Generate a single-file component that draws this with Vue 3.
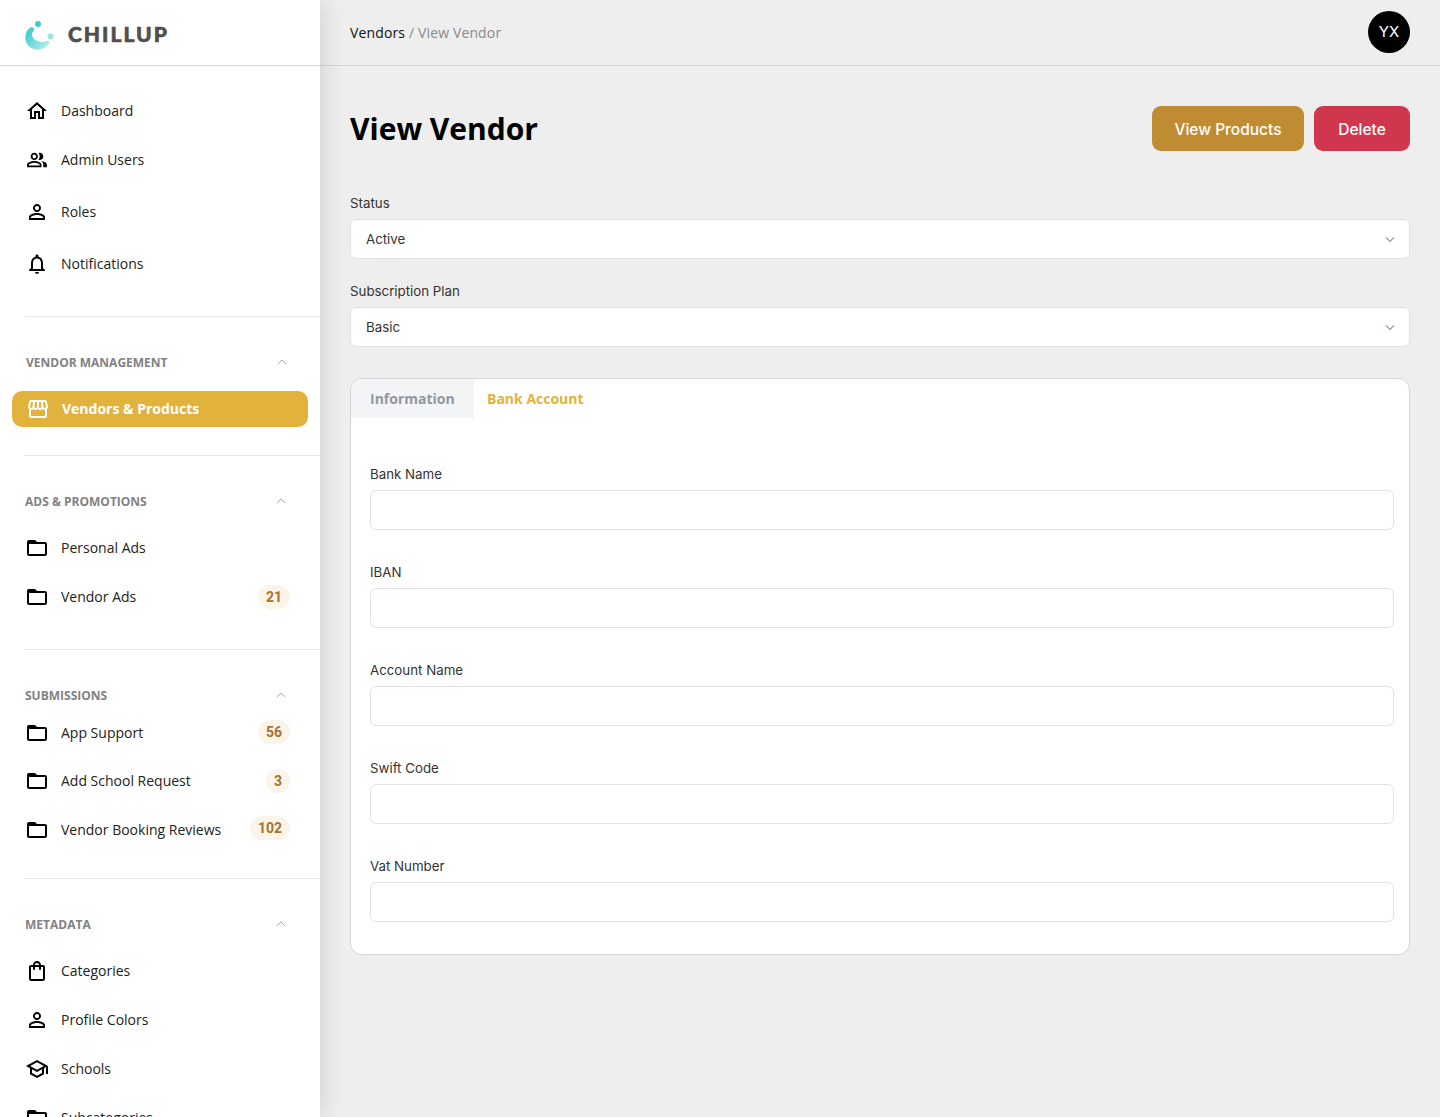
<template>
  <div class="layout">
    <aside class="sidebar">
      <div class="brand">
        <svg class="brand__mark" width="32" height="32" viewBox="0 0 32 32">
          <defs>
            <linearGradient id="arc" x1="0" y1="0" x2="1" y2="1">
              <stop offset="0.25" stop-color="#4ad0d3" />
              <stop offset="1" stop-color="#c4efee" />
            </linearGradient>
          </defs>
          <path d="M6.200 9.600C2.800 12 1.200 16 1.300 20c.2 6.500 5.700 11.700 12.200 11.700 5 0 9.300-2.900 11.500-6.700.8-1.500-.5-2.700-2-2-2.500 1-5 1.200-7.500.8-4-.8-7.200-3.800-7.500-7.300-.1-1.500.5-2.500 1.800-3.700 1.700-1.800-1.300-4.800-3.600-3.200z" fill="url(#arc)" />
          <circle cx="14" cy="6" r="3" fill="#3fcbd0" />
          <circle cx="26.500" cy="18.500" r="3" fill="#9fe3e3" />
        </svg>
        <span class="brand__name">CHILLUP</span>
      </div>

      <ul class="nav-top">
        <li v-for="item in topItems" :key="item.label" class="nav-row" :style="{ height: item.h + 'px' }">
          <svg class="nav-row__icon" :class="{ 'nav-row__icon--small': item.small }" viewBox="0 0 24 24"><path :d="item.icon" /></svg>
          <span class="nav-row__label">{{ item.label }}</span>
        </li>
      </ul>
      <div class="divider" style="margin-top: 27px"></div>

      <section v-for="group in groups" :key="group.title" class="group">
        <div class="group__head" :class="{ 'group__head--shift': group.shift }">
          <span>{{ group.title }}</span>
          <svg width="12" height="12" viewBox="0 0 12 12" fill="none"><path d="M1.800 8 6 4l4.200 4" stroke="#a9a9a9" stroke-width="1" /></svg>
        </div>
        <ul :style="{ marginTop: group.top + 'px' }">
          <li
            v-for="item in group.items"
            :key="item.label"
            class="nav-row"
            :class="{ 'nav-row--active': item.active }"
            :style="{ height: item.h + 'px' }"
          >
            <svg class="nav-row__icon" viewBox="0 0 24 24"><path :d="item.icon" /></svg>
            <span class="nav-row__label">{{ item.label }}</span>
            <span v-if="item.badge" class="badge" :style="{ marginBottom: (item.lift || 0) + 'px' }">{{ item.badge }}</span>
          </li>
        </ul>
        <div v-if="group.after" class="divider" :style="{ marginTop: group.after + 'px' }"></div>
      </section>
    </aside>

    <main class="main">
      <header class="topbar">
        <div class="crumbs"><a>Vendors</a> / View Vendor</div>
        <div class="avatar">YX</div>
      </header>

      <div class="content">
        <div class="title-row">
          <h1>View Vendor</h1>
          <div class="actions">
            <button class="btn btn--gold">View Products</button>
            <button class="btn btn--red">Delete</button>
          </div>
        </div>

        <div v-for="sel in selects" :key="sel.label" class="select-field">
          <label>{{ sel.label }}</label>
          <div class="select">
            <span>{{ sel.value }}</span>
            <svg width="12" height="12" viewBox="0 0 12 12" fill="none"><path d="M2 4.300 6 8.300l4-4" stroke="#8b95a3" stroke-width="1.200" /></svg>
          </div>
        </div>

        <div class="card">
          <div class="tabs">
            <div class="tab">Information</div>
            <div class="tab tab--active">Bank Account</div>
          </div>
          <div class="form">
            <div v-for="name in bankFields" :key="name" class="field">
              <label>{{ name }}</label>
              <input type="text" />
            </div>
          </div>
        </div>
      </div>
    </main>
  </div>
</template>

<script setup>
const home = 'M12 5.690l5 4.500V18h-2v-6H9v6H7v-7.810l5-4.500M12 3L2 12h3v8h6v-6h2v6h6v-8h3L12 3z'
const people = 'M16.670 13.130C18.040 14.060 19 15.320 19 17v3h4v-3c0-2.180-3.570-3.470-6.330-3.870zM15 12c2.210 0 4-1.790 4-4s-1.790-4-4-4c-.47 0-.91.1-1.330.24C14.500 5.270 15 6.580 15 8s-.5 2.730-1.330 3.760c.42.14.86.24 1.330.24zM9 12c2.210 0 4-1.790 4-4s-1.790-4-4-4-4 1.790-4 4 1.790 4 4 4zm0-6c1.100 0 2 .9 2 2s-.9 2-2 2-2-.9-2-2 .9-2 2-2zM9 13c-2.670 0-8 1.340-8 4v3h16v-3c0-2.660-5.330-4-8-4zm6 5H3v-.99C3.200 16.290 6.300 15 9 15s5.800 1.290 6 2v1z'
const person = 'M12 5.900c1.160 0 2.100.94 2.100 2.100s-.94 2.100-2.100 2.100S9.900 9.160 9.900 8s.94-2.100 2.100-2.100m0 9c2.970 0 6.100 1.460 6.100 2.100v1.100H5.900V17c0-.64 3.130-2.100 6.100-2.100M12 4C9.790 4 8 5.790 8 8s1.790 4 4 4 4-1.790 4-4-1.790-4-4-4zm0 9c-2.670 0-8 1.340-8 4v3h16v-3c0-2.660-5.330-4-8-4z'
const bell = 'M12 22c1.100 0 2-.9 2-2h-4c0 1.100.9 2 2 2zm6-6v-5c0-3.070-1.630-5.640-4.500-6.320V4c0-.83-.67-1.500-1.500-1.500s-1.500.67-1.500 1.500v.68C7.640 5.360 6 7.920 6 11v5l-2 2v1h16v-1l-2-2zm-2 1H8v-6c0-2.480 1.510-4.500 4-4.500s4 2.020 4 4.500v6z'
const folder = 'M20 6h-8l-2-2H4c-1.100 0-1.990.9-1.990 2L2 18c0 1.100.9 2 2 2h16c1.100 0 2-.9 2-2V8c0-1.100-.9-2-2-2zm0 12H4V8h16v10z'
const store = 'M21.900 8.890l-1.050-4.370c-.22-.9-1-1.520-1.910-1.520H5.050c-.9 0-1.690.63-1.900 1.520L2.100 8.890c-.24 1.020-.02 2.060.62 2.880.08.11.19.19.28.29V19c0 1.100.9 2 2 2h14c1.100 0 2-.9 2-2v-6.940c.09-.09.2-.18.28-.28.64-.82.87-1.870.62-2.890zM18.910 4.990l1.050 4.370c.1.42.01.84-.25 1.170-.14.18-.44.47-.94.47-.61 0-1.140-.49-1.210-1.140L16.980 5l1.930-.01zM13 5h1.960l.54 4.520c.05.39-.07.78-.33 1.070-.22.26-.54.41-.95.41-.67 0-1.220-.59-1.220-1.310V5zM8.490 9.520L9.040 5H11v4.690c0 .72-.55 1.310-1.290 1.310-.34 0-.65-.15-.89-.41-.25-.29-.37-.68-.33-1.070zm-4.450-.16L5.050 5h1.970l-.58 4.860c-.08.65-.6 1.140-1.210 1.140-.49 0-.8-.29-.93-.47-.27-.32-.36-.75-.26-1.170zM5 19v-6.030c.08.01.15.03.23.03.87 0 1.660-.36 2.240-.95.6.6 1.400.95 2.310.95.87 0 1.650-.36 2.230-.93.59.57 1.390.93 2.290.93.84 0 1.640-.35 2.240-.95.58.59 1.370.95 2.240.95.08 0 .15-.02.23-.03V19H5z'
const bag = 'M18 6h-2c0-2.210-1.790-4-4-4S8 3.790 8 6H6c-1.100 0-2 .9-2 2v12c0 1.100.9 2 2 2h12c1.100 0 2-.9 2-2V8c0-1.100-.9-2-2-2zm-6-2c1.100 0 2 .9 2 2h-4c0-1.100.9-2 2-2zm6 16H6V8h2v2c0 .55.45 1 1 1s1-.45 1-1V8h4v2c0 .55.45 1 1 1s1-.45 1-1V8h2v12z'
const school = 'M12 3L1 9l4 2.180v6L12 21l7-3.820v-6l2-1.090V17h2V9L12 3zm6.820 6L12 12.720 5.180 9 12 5.280 18.820 9zM17 15.990l-5 2.730-5-2.730v-3.720L12 15l5-2.730v3.720z'

const topItems = [
  { label: 'Dashboard', icon: home, h: 48 },
  { label: 'Admin Users', icon: people, h: 50, small: true },
  { label: 'Roles', icon: person, h: 54 },
  { label: 'Notifications', icon: bell, h: 50 },
]

const groups = [
  {
    title: 'Vendor Management',
    top: 17,
    after: 28,
    shift: true,
    items: [{ label: 'Vendors & Products', icon: store, h: 36, active: true }],
  },
  {
    title: 'Ads & Promotions',
    top: 11,
    after: 27,
    items: [
      { label: 'Personal Ads', icon: folder, h: 48 },
      { label: 'Vendor Ads', icon: folder, h: 50, badge: 21 },
    ],
  },
  {
    title: 'Submissions',
    top: 2,
    after: 23,
    items: [
      { label: 'App Support', icon: folder, h: 48, badge: 56, lift: 2 },
      { label: 'Add School Request', icon: folder, h: 48, badge: 3 },
      { label: 'Vendor Booking Reviews', icon: folder, h: 50, badge: 102, lift: 4 },
    ],
  },
  {
    title: 'Metadata',
    top: 11,
    items: [
      { label: 'Categories', icon: bag, h: 48 },
      { label: 'Profile Colors', icon: person, h: 50 },
      { label: 'Schools', icon: school, h: 48 },
      { label: 'Subcategories', icon: folder, h: 50 },
    ],
  },
]

const selects = [
  { label: 'Status', value: 'Active' },
  { label: 'Subscription Plan', value: 'Basic' },
]

const bankFields = ['Bank Name', 'IBAN', 'Account Name', 'Swift Code', 'Vat Number']
</script>

<style>
html,
body {
  margin: 0;
  height: 100%;
  overflow: hidden;
  background: #eeeeee;
}
</style>

<style scoped>
ul {
  margin: 0;
  padding: 0;
  list-style: none;
}

.layout {
  display: flex;
  height: 100vh;
  overflow: hidden;
  font-family: 'Open Sans', sans-serif;
  background: #eeeeee;
}

.sidebar {
  flex: 0 0 320px;
  height: 100vh;
  overflow: hidden;
  background: #fff;
  box-shadow: 0 0 24px rgba(0, 0, 0, 0.15);
  position: relative;
  z-index: 2;
}

.brand {
  display: flex;
  align-items: center;
  gap: 12px;
  height: 65px;
  padding-left: 24px;
  border-bottom: 1px solid #d4d4d4;
  margin-bottom: 21px;
}

.brand__mark {
  margin-top: 3px;
}

.brand__name {
  margin-top: 1px;
  font-family: Lato, sans-serif;
  font-weight: 900;
  font-size: 21px;
  letter-spacing: 2px;
  color: #4f4f4f;
  -webkit-text-stroke: 0.6px #4f4f4f;
}

.divider {
  margin-left: 25px;
  height: 1px;
  background: #e6e6e6;
}

.group {
  padding-top: 33px;
}

.group__head {
  display: flex;
  align-items: center;
  justify-content: space-between;
  height: 24px;
  padding: 0 33px 0 25px;
  font-size: 12px;
  font-weight: 700;
  text-transform: uppercase;
  color: #828282;
}

.group__head--shift {
  padding: 0 32px 0 26px;
}

.nav-row {
  display: flex;
  align-items: center;
  padding: 0 30px 0 25px;
  font-size: 14px;
  color: #222;
}

.nav-row__icon {
  flex: none;
  width: 24px;
  height: 24px;
  margin-right: 12px;
  fill: #000;
}

.nav-row__icon--small {
  transform: scale(0.9);
}

.nav-row__label {
  flex: 1;
  margin-bottom: 2px;
}

.nav-row--active {
  margin: 0 12px;
  padding: 0 14px;
  border-radius: 10px;
  background: #e2b33c;
  color: #fff;
  font-weight: 700;
}

.nav-row--active .nav-row__icon {
  fill: #fff;
}

.badge {
  flex: none;
  min-width: 24px;
  height: 24px;
  padding: 0 8px;
  box-sizing: border-box;
  border-radius: 12px;
  background: #faf5e8;
  color: #a8702e;
  font-family: Roboto, sans-serif;
  font-size: 14px;
  font-weight: 700;
  line-height: 24px;
  text-align: center;
}

.main {
  flex: 1;
  min-width: 0;
}

.topbar {
  display: flex;
  align-items: center;
  justify-content: space-between;
  height: 65px;
  padding: 0 30px;
  border-bottom: 1px solid #d4d4d4;
}

.crumbs {
  font-size: 14px;
  letter-spacing: 0.14px;
  color: #8a8a8a;
}

.crumbs a {
  color: #111;
}

.avatar {
  width: 42px;
  height: 42px;
  margin-bottom: 2px;
  border-radius: 50%;
  background: #000;
  color: #fff;
  font-family: Inter, sans-serif;
  font-size: 15px;
  line-height: 42px;
  text-align: center;
}

.content {
  padding: 40px 30px 0;
}

.title-row {
  display: flex;
  align-items: center;
  justify-content: space-between;
  height: 45px;
  margin-bottom: 44px;
}

h1 {
  margin: 0;
  font-size: 30px;
  font-weight: 700;
  color: #000;
}

.actions {
  display: flex;
  gap: 10px;
}

.btn {
  height: 45px;
  padding: 2px 0 0;
  border: 0;
  border-radius: 9px;
  color: #fff;
  font-family: Inter, sans-serif;
  font-size: 15.5px;
  font-weight: 500;
}

.btn--gold {
  width: 152px;
  background: #c08c31;
}

.btn--red {
  width: 96px;
  background: #d0374f;
}

label {
  display: block;
  margin-bottom: 8px;
  font-family: Inter, sans-serif;
  font-size: 13.3px;
  line-height: 16px;
  color: #333;
}

.select-field {
  margin-bottom: 24px;
}

.select {
  display: flex;
  align-items: center;
  justify-content: space-between;
  height: 40px;
  padding: 0 13px 0 15px;
  box-sizing: border-box;
  background: #fff;
  border: 1px solid #e2e2e2;
  border-radius: 6px;
  font-family: Inter, sans-serif;
  font-size: 13.3px;
  color: #333;
}

.card {
  margin-top: 31px;
  background: #fff;
  border: 1px solid #d5d5d5;
  border-radius: 12px;
  overflow: hidden;
}

.tabs {
  display: flex;
  height: 39px;
}

.tab {
  width: 123px;
  box-sizing: border-box;
  padding-left: 19px;
  background: #f3f4f6;
  color: #9097a3;
  font-size: 14px;
  font-weight: 700;
  line-height: 39px;
}

.tab--active {
  padding-left: 13px;
  background: transparent;
  color: #e2b33c;
}

.form {
  padding: 48px 15px 32px 19px;
}

.field + .field {
  margin-top: 34px;
}

.field input {
  display: block;
  width: 100%;
  height: 40px;
  box-sizing: border-box;
  background: #fff;
  border: 1px solid #e2e2e2;
  border-radius: 6px;
}
</style>
